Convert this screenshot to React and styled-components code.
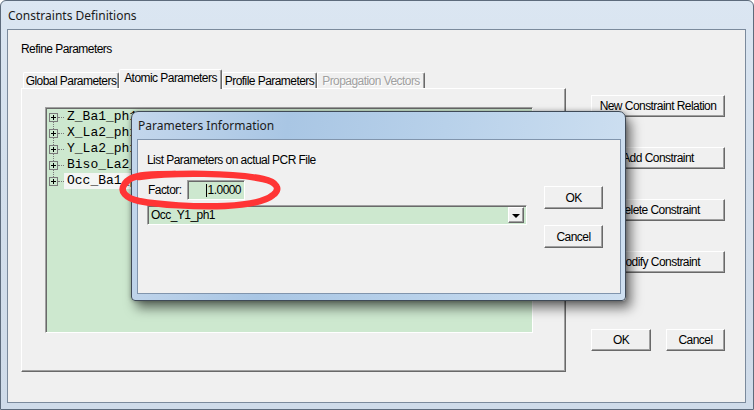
import React from 'react';
import styled, { createGlobalStyle } from 'styled-components';

const GlobalStyle = createGlobalStyle`
  html, body {
    margin: 0;
    padding: 0;
    background: #ffffff;
  }
  * {
    box-sizing: border-box;
  }
`;

const uiFont = `"Liberation Sans", Arial, sans-serif`;

const Window = styled.div`
  position: relative;
  width: 754px;
  height: 410px;
  display: flex;
  flex-direction: column;
  background: linear-gradient(180deg, #dbe6f2 0%, #d3dfec 40%, #cfdbe9 100%);
  border: 1px solid #5d6b7c;
  border-radius: 6px 6px 0 0;
  overflow: hidden;
  font-family: ${uiFont};
  font-size: 12px;
  letter-spacing: -0.55px;
  color: #000;
`;

const TitleBar = styled.div`
  height: 28px;
  flex-shrink: 0;
  display: flex;
  align-items: center;
  padding-left: 7px;
  font-family: "Noto Sans", "Open Sans", sans-serif;
  font-size: 12px;
  letter-spacing: 0;
  color: #1b1b1b;
`;

const Client = styled.div`
  flex: 1;
  margin: 0 7px 6px 6px;
  border: 1px solid #7b8a9c;
  background: #f0f0f0;
  padding: 12px 0 0 13px;
  display: flex;
  flex-direction: column;
`;

const GroupLabel = styled.div`
  height: 14px;
  line-height: 14px;
`;

const MainRow = styled.div`
  margin-top: 13px;
  display: flex;
  height: 303px;
`;

const TabArea = styled.div`
  width: 545px;
  display: flex;
  flex-direction: column;
`;

const TabStrip = styled.div`
  height: 19px;
  display: flex;
  align-items: flex-end;
  padding-left: 2px;
  position: relative;
  z-index: 1;
`;

const Tab = styled.div`
  width: ${p => p.w}px;
  height: ${p => (p.active ? 20 : 16)}px;
  margin-bottom: ${p => (p.active ? -1 : 0)}px;
  background: #f0f0f0;
  border-top: 1px solid #ffffff;
  border-left: 1px solid #ffffff;
  border-right: 1px solid #696969;
  box-shadow: inset -1px 0 0 #a0a0a0;
  border-radius: 2px 2px 0 0;
  display: flex;
  align-items: center;
  justify-content: center;
  padding-bottom: ${p => (p.active ? 3 : 0)}px;
  color: ${p => (p.disabled ? '#a0a0a0' : '#000')};
  text-shadow: ${p => (p.disabled ? '1px 1px 0 #ffffff' : 'none')};
  white-space: nowrap;
  overflow: hidden;
`;

const TabPanel = styled.div`
  flex: 1;
  border-top: 1px solid #ffffff;
  border-left: 1px solid #ffffff;
  border-right: 1px solid #696969;
  border-bottom: 1px solid #696969;
  box-shadow: inset -1px -1px 0 #a0a0a0;
  padding: 18px 0 0 23px;
`;

const Tree = styled.div`
  width: 488px;
  height: 226px;
  background: #cde8cf;
  border-top: 1px solid #a0a0a0;
  border-left: 1px solid #a0a0a0;
  border-right: 1px solid #ffffff;
  border-bottom: 1px solid #ffffff;
  box-shadow: inset 1px 1px 0 #696969;
  padding: 1px 0 0 3px;
`;

const TreeItems = styled.div`
  position: relative;
  display: flex;
  flex-direction: column;

  &::before {
    content: '';
    position: absolute;
    left: 4px;
    top: 8px;
    bottom: 8px;
    border-left: 1px dotted #7a7a7a;
  }
`;

const TreeRow = styled.div`
  height: 16px;
  display: flex;
  align-items: center;
  position: relative;
`;

const Expander = styled.span`
  width: 9px;
  height: 9px;
  border: 1px solid #7a7a7a;
  background: #cde8cf;
  position: relative;
  flex-shrink: 0;

  &::before {
    content: '';
    position: absolute;
    left: 1px;
    top: 3px;
    width: 5px;
    height: 1px;
    background: #000;
  }
  &::after {
    content: '';
    position: absolute;
    left: 3px;
    top: 1px;
    width: 1px;
    height: 5px;
    background: #000;
  }
`;

const Stub = styled.span`
  width: 6px;
  border-top: 1px dotted #7a7a7a;
  flex-shrink: 0;
`;

const NodeLabel = styled.span`
  font-family: "Liberation Mono", "DejaVu Sans Mono", monospace;
  font-size: 13px;
  letter-spacing: 0;
  line-height: 16px;
  padding: 0 3px;
  background: ${p => (p.selected ? '#f4f6f4' : 'transparent')};
  white-space: nowrap;
`;

const SideColumn = styled.div`
  margin-left: 25px;
  width: 134px;
  padding-top: 26px;
  display: flex;
  flex-direction: column;
  gap: 30px;
`;

const Button = styled.button`
  width: ${p => p.w || 134}px;
  height: ${p => p.h || 22}px;
  padding: 0;
  background: #f0f0f0;
  font-family: ${uiFont};
  font-size: 12px;
  letter-spacing: -0.55px;
  color: #000;
  border-top: 1px solid #ffffff;
  border-left: 1px solid #ffffff;
  border-right: 1px solid #696969;
  border-bottom: 1px solid #696969;
  box-shadow: inset -1px -1px 0 #a0a0a0;
  white-space: nowrap;
  cursor: default;
`;

const FooterButtons = styled.div`
  margin-top: auto;
  margin-bottom: 21px;
  display: flex;
  gap: 15px;
`;

/* the modal dialog floating over the main window */
const Dialog = styled.div`
  position: absolute;
  left: 130px;
  top: 110px;
  width: 495px;
  height: 190px;
  display: flex;
  flex-direction: column;
  border: 1px solid #3f4a57;
  border-radius: 7px 7px 4px 4px;
  background: linear-gradient(100deg, #c4d7ec 0%, #a9c6e4 30%, #b8d1ea 60%, #cfe0f1 100%);
  box-shadow: 5px 7px 12px rgba(0, 0, 0, 0.55), 0 0 4px rgba(0, 0, 0, 0.3);
  z-index: 5;
`;

const DialogTitle = styled.div`
  height: 27px;
  flex-shrink: 0;
  display: flex;
  align-items: center;
  padding-left: 6px;
  font-family: "Noto Sans", "Open Sans", sans-serif;
  font-size: 12px;
  letter-spacing: 0;
  color: #1b1b1b;
`;

const DialogClient = styled.div`
  flex: 1;
  margin: 0 4px 6px 5px;
  border: 1px solid #8195ad;
  background: #f0f0f0;
  display: flex;
  padding: 13px 0 0 9px;
`;

const DialogMain = styled.div`
  width: 380px;
  display: flex;
  flex-direction: column;
`;

const InfoText = styled.div`
  height: 14px;
  line-height: 14px;
`;

const FactorRow = styled.div`
  margin-top: 13px;
  display: flex;
  align-items: center;
  height: 20px;
`;

const FactorLabel = styled.span`
  width: 40px;
  padding-left: 1px;
`;

const Field = styled.div`
  height: 20px;
  background: #cde8cf;
  border-top: 1px solid #a0a0a0;
  border-left: 1px solid #a0a0a0;
  border-right: 1px solid #ffffff;
  border-bottom: 1px solid #ffffff;
  box-shadow: inset 1px 1px 0 #696969;
  display: flex;
  align-items: center;
`;

const FactorInput = styled(Field)`
  width: 58px;
  justify-content: flex-end;
  padding-right: 3px;
`;

const Caret = styled.span`
  width: 1px;
  height: 13px;
  background: #000;
  margin-right: 1px;
`;

const Combo = styled(Field)`
  margin-top: 5px;
  width: 380px;
  padding: 0 2px 0 3px;
  justify-content: space-between;
`;

const DropButton = styled.span`
  width: 16px;
  height: 16px;
  background: #f0f0f0;
  border-top: 1px solid #ffffff;
  border-left: 1px solid #ffffff;
  border-right: 1px solid #696969;
  border-bottom: 1px solid #696969;
  box-shadow: inset -1px -1px 0 #a0a0a0;
  display: flex;
  align-items: center;
  justify-content: center;

  &::after {
    content: '';
    border-left: 4px solid transparent;
    border-right: 4px solid transparent;
    border-top: 4px solid #000;
    margin-top: 1px;
  }
`;

const DialogButtons = styled.div`
  margin-left: 17px;
  padding-top: 33px;
  display: flex;
  flex-direction: column;
  gap: 16px;
`;

const Annotation = styled.svg`
  position: absolute;
  left: 114px;
  top: 164px;
  z-index: 10;
  pointer-events: none;
`;

const treeNodes = ['Z_Ba1_ph1', 'X_La2_ph1', 'Y_La2_ph1', 'Biso_La2_ph1', 'Occ_Ba1_ph1'];
const tabs = [
  { label: 'Global Parameters', w: 96 },
  { label: 'Atomic Parameters', w: 103, active: true },
  { label: 'Profile Parameters', w: 95 },
  { label: 'Propagation Vectors', w: 108, disabled: true },
];

export default function App() {
  return (
    <>
      <GlobalStyle />
      <Window>
        <TitleBar>Constraints Definitions</TitleBar>
        <Client>
          <GroupLabel>Refine Parameters</GroupLabel>
          <MainRow>
            <TabArea>
              <TabStrip>
                {tabs.map(t => (
                  <Tab key={t.label} w={t.w} active={t.active} disabled={t.disabled}>
                    {t.label}
                  </Tab>
                ))}
              </TabStrip>
              <TabPanel>
                <Tree>
                  <TreeItems>
                    {treeNodes.map((n, i) => (
                      <TreeRow key={n}>
                        <Expander />
                        <Stub />
                        <NodeLabel selected={i === treeNodes.length - 1}>{n}</NodeLabel>
                      </TreeRow>
                    ))}
                  </TreeItems>
                </Tree>
              </TabPanel>
            </TabArea>
            <SideColumn>
              <Button>New Constraint Relation</Button>
              <Button>Add Constraint</Button>
              <Button>Delete Constraint</Button>
              <Button>Modify Constraint</Button>
              <FooterButtons>
                <Button w={60}>OK</Button>
                <Button w={59}>Cancel</Button>
              </FooterButtons>
            </SideColumn>
          </MainRow>
        </Client>

        <Dialog>
          <DialogTitle>Parameters Information</DialogTitle>
          <DialogClient>
            <DialogMain>
              <InfoText>List Parameters on actual PCR File</InfoText>
              <FactorRow>
                <FactorLabel>Factor:</FactorLabel>
                <FactorInput>
                  <Caret />
                  1.0000
                </FactorInput>
              </FactorRow>
              <Combo>
                <span>Occ_Y1_ph1</span>
                <DropButton />
              </Combo>
            </DialogMain>
            <DialogButtons>
              <Button w={59} h={23}>OK</Button>
              <Button w={59} h={23}>Cancel</Button>
            </DialogButtons>
          </DialogClient>
        </Dialog>

        <Annotation width="170" height="50" viewBox="0 0 170 50">
          <path
            d="M 24 12 C 60 7, 120 8, 148 14 C 162 17, 166 24, 158 30 C 150 37, 130 40, 110 41 C 80 42, 45 40, 24 36 C 10 33, 5 26, 9 20 C 12 14, 20 11, 30 10 C 42 9, 52 9, 60 9"
            fill="none"
            stroke="#ff3535"
            strokeWidth="6.5"
            strokeLinecap="round"
            strokeLinejoin="round"
          />
        </Annotation>
      </Window>
    </>
  );
}
